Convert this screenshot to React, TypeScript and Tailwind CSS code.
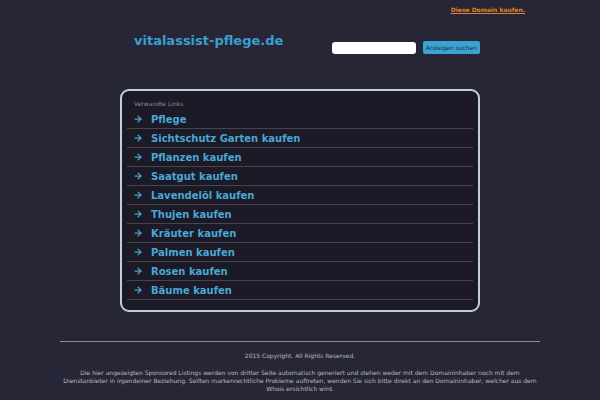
import { ArrowRight } from 'lucide-react';

const links = [
  'Pflege',
  'Sichtschutz Garten kaufen',
  'Pflanzen kaufen',
  'Saatgut kaufen',
  'Lavendelöl kaufen',
  'Thujen kaufen',
  'Kräuter kaufen',
  'Palmen kaufen',
  'Rosen kaufen',
  'Bäume kaufen',
];

export default function App() {
  return (
    <div
      className="h-[400px] w-[600px] overflow-hidden bg-[#272636]"
      style={{ fontFamily: '"DejaVu Sans", Verdana, sans-serif' }}
    >
      {/* top bar */}
      <div className="flex h-[20px] justify-end pr-[75px] pt-[5px]">
        <a className="text-[6px] font-bold leading-[9px] text-[#e0812b] underline">Diese Domain kaufen.</a>
      </div>

      {/* header */}
      <div className="mx-auto flex w-[360px] items-start justify-between pt-[11px]">
        <div className="pl-[14px] text-[13px] font-bold leading-[20px] text-[#3a9fcf]">
          vitalassist-pflege.de
        </div>
        <div className="flex items-center gap-[7px] pt-[10px]">
          <div className="h-[12px] w-[84px] rounded-[3px] bg-white" />
          <button className="h-[13px] rounded-[2px] bg-[#3ba3d4] px-[3px] text-[6px] leading-[13px] text-[#1c2a3a]">
            Anzeigen suchen
          </button>
        </div>
      </div>

      {/* links box */}
      <div className="mx-auto mt-[35px] w-[360px] rounded-[9px] border-2 border-[#bfcfe0] bg-[#1b1a26] px-[5px] pb-[10px] pt-[9px]">
        <div className="pl-[7px] text-[6px] leading-[8px] text-[#8c8c99]">Verwandte Links</div>
        <div className="mt-[2px]">
          {links.map((l) => (
            <div
              key={l}
              className="flex h-[19px] items-center border-b border-[#45454f] pl-[6px]"
            >
              <ArrowRight className="h-[10px] w-[10px] text-[#49a8d5]" strokeWidth={3} />
              <span className="ml-[8px] text-[10px] font-bold text-[#49a8d5]">{l}</span>
            </div>
          ))}
        </div>
      </div>

      {/* footer */}
      <div className="mx-auto mt-[29px] w-[480px] border-t border-[#8b8b99] pt-[10px] text-center text-[6px] leading-[8px] text-[#b8b8c2]">
        <p>2015 Copyright. All Rights Reserved.</p>
        <p className="mt-[9px]">
          Die hier angezeigten Sponsored Listings werden von dritter Seite automatisch generiert und stehen weder mit dem Domaininhaber noch mit dem Dienstanbieter in irgendeiner Beziehung. Sollten markenrechtliche Probleme auftreten, wenden Sie sich bitte direkt an den Domaininhaber, welcher aus dem Whois ersichtlich wird.
        </p>
        <p className="mt-[6px]">Privacy Policy</p>
      </div>
    </div>
  );
}
